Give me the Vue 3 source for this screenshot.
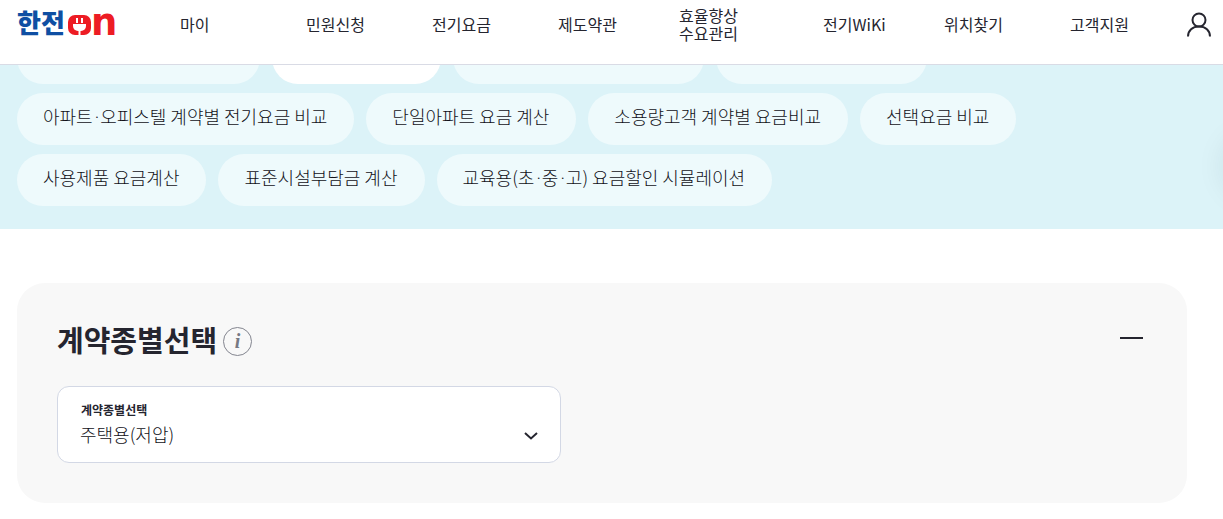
<script setup>
import { ref } from 'vue'

const menu = [
  ['마이'],
  ['민원신청'],
  ['전기요금'],
  ['제도약관'],
  ['효율향상', '수요관리'],
  ['전기WiKi'],
  ['위치찾기'],
  ['고객지원'],
]

const tabRows = [
  ['아파트·오피스텔 계약별 전기요금 비교', '단일아파트 요금 계산', '소용량고객 계약별 요금비교', '선택요금 비교'],
  ['사용제품 요금계산', '표준시설부담금 계산', '교육용(초·중·고) 요금할인 시뮬레이션'],
]

const open = ref(true)
const contract = ref('주택용(저압)')
</script>

<template>
  <div class="page">
    <header class="header">
      <a href="#" class="logo">
        <svg width="104" height="48" viewBox="0 0 104 48">
          <text x="0" y="33" class="logo-ko">한전</text>
          <rect x="51" y="15" width="23" height="20" rx="7" fill="#ed1c24" />
          <path d="M60 18v5M65 18v5" stroke="#fff" stroke-width="2" />
          <path d="M56 24h13v2a5 5 0 0 1-5 5h-3a5 5 0 0 1-5-5z" fill="#fff" />
          <path d="M62.500 30v5" stroke="#fff" stroke-width="2" />
          <text x="74" y="35" class="logo-n">n</text>
        </svg>
      </a>
      <nav class="menu">
        <a v-for="item in menu" :key="item[0]" href="#">
          <span v-for="line in item" :key="line">{{ line }}</span>
        </a>
      </nav>
      <button class="account" type="button" aria-label="마이">
        <svg width="26" height="26" viewBox="0 0 26 26" fill="none" stroke="#25252f" stroke-width="2">
          <circle cx="13" cy="8" r="6.500" />
          <path d="M2 24.500c0-6 4.500-10 11-10s11 4 11 10" />
        </svg>
      </button>
    </header>

    <section class="tabs">
      <div class="row">
        <span class="tab first"></span>
        <span class="tab current"></span>
        <span class="tab third"></span>
        <span class="tab fourth"></span>
      </div>
      <div v-for="(row, i) in tabRows" :key="i" class="row">
        <button v-for="t in row" :key="t" class="tab" type="button">
          <template v-for="(part, n) in t.split('·')" :key="n"><span v-if="n" class="dot">·</span>{{ part }}</template>
        </button>
      </div>
      <div class="edge-shadow"></div>
    </section>

    <main class="card">
      <div class="card-head">
        <h2>계약종별선택</h2>
        <button class="info" type="button">i</button>
        <button class="toggle" type="button" aria-label="계약종별선택" :aria-expanded="open" @click="open = !open">
          <span class="bar"></span>
        </button>
      </div>
      <div v-if="open" class="fields">
        <div class="field">
          <label for="contract">계약종별선택</label>
          <select id="contract" v-model="contract">
            <option>주택용(저압)</option>
          </select>
          <svg class="chevron" width="16" height="10" viewBox="0 0 16 10" fill="none" stroke="#25252f" stroke-width="2">
            <path d="M2 2l6 5.500L14 2" />
          </svg>
        </div>
      </div>
    </main>
  </div>
</template>

<style>
body {
  margin: 0;
  background: #fff;
}
</style>

<style scoped>
.page {
  font-family: "Noto Sans CJK KR", sans-serif;
  color: #25252f;
}
.page * {
  box-sizing: border-box;
}
button {
  border: 0;
  padding: 0;
  background: none;
  font: inherit;
  color: inherit;
  cursor: pointer;
}
a {
  color: inherit;
  text-decoration: none;
}
svg {
  display: block;
}
.header {
  position: sticky;
  top: 0;
  z-index: 1;
  display: flex;
  height: 65px;
  padding: 0 11px 0 17px;
  background: #fff;
  border-bottom: 1px solid #d9dbe5;
}
.logo {
  width: 163px;
}
.logo-ko {
  font-size: 26px;
  font-weight: 900;
  fill: #0f4fa3;
}
.logo-n {
  font-family: "DejaVu Sans", sans-serif;
  font-size: 37px;
  font-weight: 700;
  fill: #ed1c24;
}
.menu {
  flex: 1;
  height: 48px;
  display: grid;
  grid-template-columns: 126fr 126fr 126fr 121fr 144fr 121fr 126fr 116fr;
  align-items: center;
}
.menu a {
  font-size: 16px;
  line-height: 18px;
}
.menu span {
  display: block;
  white-space: nowrap;
}
.account {
  height: 50px;
}
.tabs {
  position: relative;
  overflow: hidden;
  display: flex;
  flex-direction: column;
  gap: 9px;
  margin-top: -33px;
  padding: 0 17px 23px;
  background: #dcf3f8;
}
.row {
  display: flex;
  gap: 12px;
}
.tab {
  height: 52px;
  padding: 0 27px 6px 26px;
  border-radius: 26px;
  background: #eefafc;
  font-size: 18px;
  font-weight: 300;
  color: #111118;
  white-space: nowrap;
}
.dot {
  margin: 0 1px 0 2px;
  font-family: Roboto, sans-serif;
}
.first {
  width: 243px;
}
.current {
  width: 169px;
  background: #fff;
}
.third {
  width: 251px;
}
.fourth {
  width: 211px;
}
.edge-shadow {
  position: absolute;
  right: -62px;
  top: 104px;
  width: 60px;
  height: 60px;
  border-radius: 30px;
  box-shadow: 0 0 30px rgba(0, 40, 50, 0.1);
}
.card {
  margin: 54px 36px 16px 17px;
  padding: 36px 40px 40px;
  border-radius: 28px;
  background: #f8f8f8;
}
.card-head {
  display: flex;
  align-items: center;
  height: 42px;
}
h2 {
  margin: 0;
  font-size: 29px;
  line-height: 40px;
  padding-bottom: 2px;
  font-weight: 700;
}
.info {
  width: 29px;
  height: 29px;
  margin: 2px 0 0 6px;
  border: 1px solid #83858f;
  border-radius: 50%;
  font: italic 700 20px/26px "Liberation Serif", serif;
  color: #777983;
}
.toggle {
  display: flex;
  align-items: center;
  height: 32px;
  margin: 0 4px 4px auto;
}
.bar {
  width: 23px;
  height: 2px;
  background: #25252f;
}
.fields {
  display: grid;
  grid-template-columns: 1fr 1fr;
  gap: 82px;
  margin-top: 25px;
}
.field {
  position: relative;
  height: 77px;
  padding-top: 14px;
  border: 1px solid #d3d8e5;
  border-radius: 12px;
  background: #fff;
}
.field label {
  display: block;
  padding-left: 23px;
  font-size: 12px;
  line-height: 18px;
  font-weight: 700;
}
.field select {
  display: block;
  width: 100%;
  height: 30px;
  padding: 0 22px;
  border: 0;
  background: transparent;
  appearance: none;
  font-family: inherit;
  font-size: 18px;
  font-weight: 300;
  color: #111118;
}
.chevron {
  position: absolute;
  right: 21px;
  top: 44px;
  pointer-events: none;
}
</style>
